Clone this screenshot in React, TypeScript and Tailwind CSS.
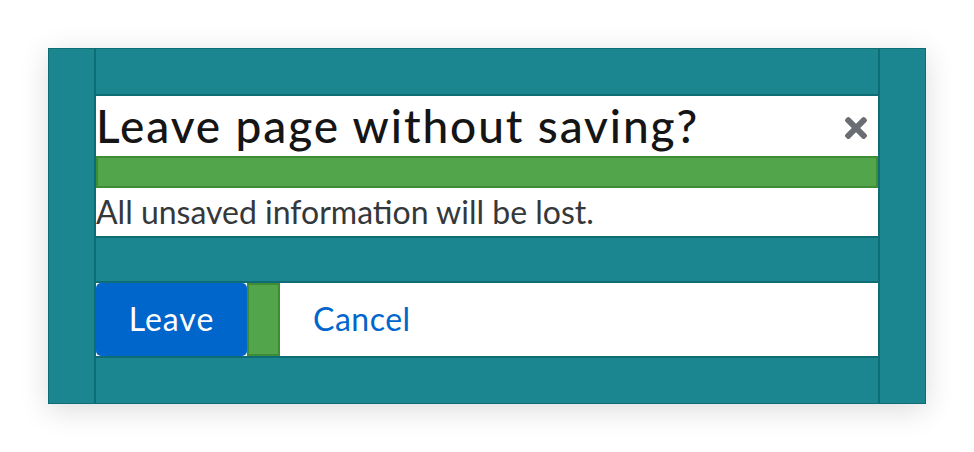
export default function App() {
    return (
        <div className="min-h-screen bg-white p-12" style={{ fontFamily: 'Lato, "Open Sans", sans-serif' }}>
            <div className="flex h-[356px] w-[878px] border border-[#0d6c74] bg-[#1b8690] shadow-[0_6px_28px_rgba(0,0,0,0.14)]">
                <div className="w-[47px] border-r-2 border-[#0d6c74]" />

                <div className="flex w-[782px] flex-col">
                    <div className="h-[47px] border-b-2 border-[#0d6c74]" />

                    <header className="flex h-[60px] items-center justify-between bg-white">
                        <h1 className="text-[46px] leading-[60px] font-medium tracking-[1.9px] text-[#151515]">
                            Leave page without saving?
                        </h1>
                        <button className="flex h-[60px] w-[45px] items-center justify-center pt-[4px] text-[#6a6e73]">
                            <svg viewBox="0 80 352 352" className="h-[22px] w-[22px]" fill="currentColor">
                                <path d="M242.72 256l100.07-100.07c12.28-12.28 12.28-32.19 0-44.48l-22.24-22.24c-12.28-12.28-32.19-12.28-44.48 0L176 189.28 75.93 89.21c-12.28-12.28-32.19-12.28-44.48 0L9.21 111.45c-12.28 12.28-12.28 32.19 0 44.48L109.28 256 9.21 356.07c-12.28 12.28-12.28 32.19 0 44.48l22.24 22.24c12.28 12.28 32.2 12.28 44.48 0L176 322.72l100.07 100.07c12.28 12.28 32.2 12.28 44.48 0l22.24-22.24c12.28-12.28 12.28-32.19 0-44.48L242.72 256z" />
                            </svg>
                        </button>
                    </header>

                    <div className="h-[32px] border-2 border-[#3f8c37] bg-[#53a54b]" />

                    <div className="h-[48px] bg-white text-[32px] leading-[48px] text-[#35383b]">
                        All unsaved information will be lost.
                    </div>

                    <div className="h-[47px] border-y-2 border-[#0d6c74]" />

                    <footer className="flex h-[73px] bg-white">
                        <button className="w-[151px] rounded-[5px] bg-[#0066cc] pb-[1px] text-[32px] tracking-[1px] text-white">
                            Leave
                        </button>
                        <div className="w-[33px] border-2 border-[#3f8c37] bg-[#53a54b]" />
                        <button className="pb-[1px] pl-[33px] pr-[32px] text-[32px] tracking-[0.5px] text-[#0066cc]">
                            Cancel
                        </button>
                    </footer>

                    <div className="flex-1 border-t-2 border-[#0d6c74]" />
                </div>

                <div className="w-[47px] border-l-2 border-[#0d6c74]" />
            </div>
        </div>
    )
}
